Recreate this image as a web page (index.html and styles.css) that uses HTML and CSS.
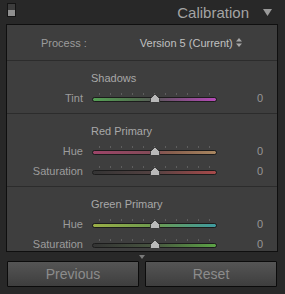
FILE: index.html
```html
<!DOCTYPE html>
<html>
<head>
    <title>Calibration</title>
    <meta charset="UTF-8">
    <link rel="stylesheet" href="styles.css">
</head>
<body>
    <!-- Panel header -->
    <div class="panel-header">
        <span class="panel-switch"></span>
        <span class="panel-title">Calibration</span>
        <svg class="panel-arrow" width="9" height="7" viewBox="0 0 9 7"><path d="M0 0H9L4.5 7Z" fill="#9a9a9a"/></svg>
    </div>

    <div class="panel">
        <!-- Process version -->
        <div class="process-row">
            <span class="process-label">Process :</span>
            <span class="process-value">Version 5 (Current)
                <svg width="6" height="9" viewBox="0 0 6 9"><path d="M0 3.5L3 0L6 3.5Z M0 5.5L3 9L6 5.5Z" fill="#a8a8a8"/></svg>
            </span>
        </div>

        <!-- Shadows -->
        <div class="section">
            <div class="section-title">Shadows</div>
            <div class="slider-row">
                <span class="slider-label">Tint</span>
                <div class="slider">
                    <div class="ticks"><i></i><i></i><i></i><i></i><i></i><i></i><i></i><i></i><i></i><i></i><i></i></div>
                    <div class="track track-tint"></div>
                    <svg class="thumb" width="10" height="9" viewBox="0 0 10 9"><path d="M5 0L9.5 4.5V7.5Q9.5 8.5 8.5 8.5H1.5Q0.5 8.5 0.5 7.5V4.5Z" fill="#b9b9b9" stroke="#2a2a2a" stroke-width="0.8"/></svg>
                </div>
                <span class="slider-value">0</span>
            </div>
        </div>

        <!-- Red Primary -->
        <div class="section">
            <div class="section-title">Red Primary</div>
            <div class="slider-row">
                <span class="slider-label">Hue</span>
                <div class="slider">
                    <div class="ticks"><i></i><i></i><i></i><i></i><i></i><i></i><i></i><i></i><i></i><i></i><i></i></div>
                    <div class="track track-red-hue"></div>
                    <svg class="thumb" width="10" height="9" viewBox="0 0 10 9"><path d="M5 0L9.5 4.5V7.5Q9.5 8.5 8.5 8.5H1.5Q0.5 8.5 0.5 7.5V4.5Z" fill="#b9b9b9" stroke="#2a2a2a" stroke-width="0.8"/></svg>
                </div>
                <span class="slider-value">0</span>
            </div>
            <div class="slider-row">
                <span class="slider-label">Saturation</span>
                <div class="slider">
                    <div class="ticks"><i></i><i></i><i></i><i></i><i></i><i></i><i></i><i></i><i></i><i></i><i></i></div>
                    <div class="track track-red-sat"></div>
                    <svg class="thumb" width="10" height="9" viewBox="0 0 10 9"><path d="M5 0L9.5 4.5V7.5Q9.5 8.5 8.5 8.5H1.5Q0.5 8.5 0.5 7.5V4.5Z" fill="#b9b9b9" stroke="#2a2a2a" stroke-width="0.8"/></svg>
                </div>
                <span class="slider-value">0</span>
            </div>
        </div>

        <!-- Green Primary -->
        <div class="section">
            <div class="section-title">Green Primary</div>
            <div class="slider-row">
                <span class="slider-label">Hue</span>
                <div class="slider">
                    <div class="ticks"><i></i><i></i><i></i><i></i><i></i><i></i><i></i><i></i><i></i><i></i><i></i></div>
                    <div class="track track-green-hue"></div>
                    <svg class="thumb" width="10" height="9" viewBox="0 0 10 9"><path d="M5 0L9.5 4.5V7.5Q9.5 8.5 8.5 8.5H1.5Q0.5 8.5 0.5 7.5V4.5Z" fill="#b9b9b9" stroke="#2a2a2a" stroke-width="0.8"/></svg>
                </div>
                <span class="slider-value">0</span>
            </div>
            <div class="slider-row">
                <span class="slider-label">Saturation</span>
                <div class="slider">
                    <div class="ticks"><i></i><i></i><i></i><i></i><i></i><i></i><i></i><i></i><i></i><i></i><i></i></div>
                    <div class="track track-green-sat"></div>
                    <svg class="thumb" width="10" height="9" viewBox="0 0 10 9"><path d="M5 0L9.5 4.5V7.5Q9.5 8.5 8.5 8.5H1.5Q0.5 8.5 0.5 7.5V4.5Z" fill="#b9b9b9" stroke="#2a2a2a" stroke-width="0.8"/></svg>
                </div>
                <span class="slider-value">0</span>
            </div>
        </div>
    </div>

    <!-- Collapse marker -->
    <div class="panel-end">
        <svg width="6" height="4" viewBox="0 0 6 4"><path d="M0 0H6L3 4Z" fill="#7a7a7a"/></svg>
    </div>

    <!-- Footer buttons -->
    <div class="panel-buttons">
        <button>Previous</button>
        <button>Reset</button>
    </div>
</body>
</html>
```

FILE: styles.css
```css
/* --- Base --- */
body {
    margin: 0;
    width: 285px;
    height: 294px;
    overflow: hidden;
    background-color: #282828;
    font-family: "Liberation Sans", Arial, sans-serif;
    font-size: 11px;
    color: #a6a6a6;
}

/* --- Header --- */
.panel-header {
    height: 24px;
    display: flex;
    align-items: center;
    padding: 0 13px 0 7px;
    box-sizing: border-box;
}
.panel-switch {
    width: 9px;
    height: 14px;
    box-sizing: border-box;
    border: 1px solid #141414;
    background: linear-gradient(#3d3d3d 50%, #8f8f8f 50%);
    align-self: flex-start;
    margin-top: 3px;
}
.panel-title {
    margin-left: auto;
    font-size: 15px;
    color: #a4a4a4;
}
.panel-arrow {
    margin-left: 14px;
}

/* --- Panel body --- */
.panel {
    margin-left: 6px;
    width: 272px;
    height: 228px;
    box-sizing: border-box;
    border: 1px solid #0f0f0f;
    background-color: #3e3e3e;
    overflow: hidden;
}
.process-row {
    height: 35px;
    display: flex;
    align-items: center;
    padding-left: 34px;
}
.process-label {
    color: #9c9c9c;
}
.process-value {
    margin-left: 53px;
    color: #c0c0c0;
    display: flex;
    align-items: center;
    gap: 3px;
}
.section {
    border-top: 1px solid #2c2c2c;
    padding: 9px 0 5px;
}
.section-title {
    padding-left: 84px;
    line-height: 16px;
    margin-bottom: 2px;
    color: #a8a8a8;
}
.slider-row {
    height: 20px;
    display: grid;
    grid-template-columns: 76px 125px 1fr;
    column-gap: 9px;
    align-items: center;
}
.slider-label {
    text-align: right;
    color: #9c9c9c;
}
.slider-value {
    text-align: right;
    padding-right: 14px;
    color: #969696;
}

/* --- Slider --- */
.slider {
    position: relative;
    height: 12px;
}
.ticks {
    position: absolute;
    top: 1px;
    left: 7px;
    right: 7px;
    display: flex;
    justify-content: space-between;
}
.ticks i {
    width: 1px;
    height: 2px;
    background-color: #5e5e5e;
}
.track {
    position: absolute;
    top: 5px;
    left: 0;
    right: 0;
    height: 3px;
    border: 1px solid #1c1c1c;
    border-radius: 3px;
}
.track-tint { background: linear-gradient(90deg, #55a055, #52724f 35%, #5a5a5a 50%, #785078 65%, #b44ab6); }
.track-red-hue { background: linear-gradient(90deg, #9c4468, #844a58 45%, #88604e 65%, #a88660); }
.track-red-sat { background: linear-gradient(90deg, #343434, #544242 50%, #a84a4a); }
.track-green-hue { background: linear-gradient(90deg, #9aae46, #6c9a4e 50%, #3e9aa0); }
.track-green-sat { background: linear-gradient(90deg, #343434, #485640 50%, #5ca446); }
.thumb {
    position: absolute;
    top: 2px;
    left: 50%;
    margin-left: -5px;
}

/* --- Footer --- */
.panel-end {
    height: 9px;
    display: flex;
    justify-content: center;
    align-items: center;
    padding-right: 1px;
}
.panel-buttons {
    display: flex;
    gap: 6px;
    padding: 0 8px 0 7px;
}
.panel-buttons button {
    flex: 1;
    height: 26px;
    border: 1px solid #0b0b0b;
    border-radius: 1px;
    background: linear-gradient(#555, #3e3e3e);
    color: #8c8c8c;
    font-family: "Liberation Sans", Arial, sans-serif;
    font-size: 14px;
    padding: 0;
}
```
